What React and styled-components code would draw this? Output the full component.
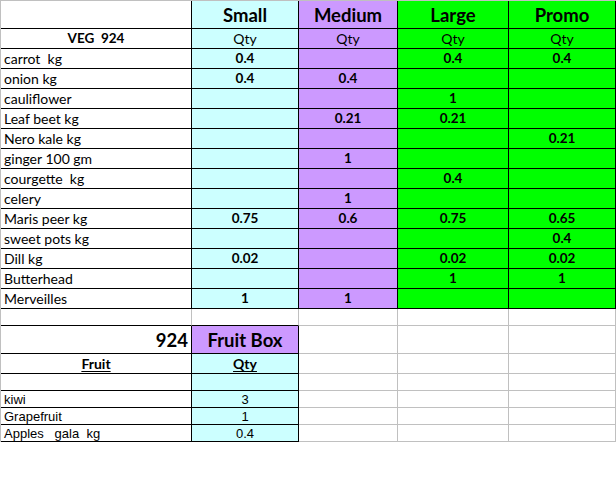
import React from 'react'
import styled, { createGlobalStyle } from 'styled-components'

const BLACK = '#000'
const GRID = '#c0c0c0'
const CYAN = '#ccffff'
const PURPLE = '#cc99ff'
const GREEN = '#00ff00'

const sizes = [
  { name: 'Small', bg: CYAN },
  { name: 'Medium', bg: PURPLE },
  { name: 'Large', bg: GREEN },
  { name: 'Promo', bg: GREEN },
]

const veg = [
  ['carrot  kg', '0.4', '', '0.4', '0.4'],
  ['onion kg', '0.4', '0.4', '', ''],
  ['cauliflower', '', '', '1', ''],
  ['Leaf beet kg', '', '0.21', '0.21', ''],
  ['Nero kale kg', '', '', '', '0.21'],
  ['ginger 100 gm', '', '1', '', ''],
  ['courgette  kg', '', '', '0.4', ''],
  ['celery', '', '1', '', ''],
  ['Maris peer kg', '0.75', '0.6', '0.75', '0.65'],
  ['sweet pots kg', '', '', '', '0.4'],
  ['Dill kg', '0.02', '', '0.02', '0.02'],
  ['Butterhead', '', '', '1', '1'],
  ['Merveilles', '1', '1', '', ''],
]

const fruit = [
  ['kiwi', '3'],
  ['Grapefruit', '1'],
  ['Apples   gala  kg', '0.4'],
]

function App() {
  return (
    <>
      <GlobalStyle />
      <Sheet>
        {/* header */}
        <Cell $h={28} />
        {sizes.map(s => (
          <Cell key={s.name} $h={28} $bg={s.bg} $align="center" $size={18.5} $bold>
            {s.name}
          </Cell>
        ))}

        <Cell $h={20} $align="center" $size={13.5} $bold>VEG  924</Cell>
        {sizes.map(s => (
          <Cell key={s.name} $h={20} $bg={s.bg} $align="center" $size={14}>Qty</Cell>
        ))}

        {veg.map(([item, ...qty]) => (
          <React.Fragment key={item}>
            <Cell $h={20} $size={14}>{item}</Cell>
            {qty.map((q, i) => (
              <Cell key={i} $h={20} $bg={sizes[i].bg} $align="center" $size={13.5} $bold>
                {q}
              </Cell>
            ))}
          </React.Fragment>
        ))}

        {/* spacer */}
        <Cell $h={17} $r={GRID} />
        <Cell $h={17} $r={GRID} />
        <Blank $h={17} />
        <Blank $h={17} />
        <Blank $h={17} />

        {/* fruit box */}
        <Cell $h={28} $align="flex-end" $size={18.5} $bold>924</Cell>
        <Cell $h={28} $bg={PURPLE} $align="center" $size={18.5} $bold>Fruit Box</Cell>
        <Blank $h={28} />
        <Blank $h={28} />
        <Blank $h={28} />

        <Cell $h={20} $align="center" $size={14} $bold><u>Fruit</u></Cell>
        <Cell $h={20} $bg={CYAN} $align="center" $size={14} $bold><u>Qty</u></Cell>
        <Blank $h={20} />
        <Blank $h={20} />
        <Blank $h={20} />

        <Cell $h={17} />
        <Cell $h={17} $bg={CYAN} />
        <Blank $h={17} />
        <Blank $h={17} />
        <Blank $h={17} />

        {fruit.map(([name, q]) => (
          <React.Fragment key={name}>
            <ArialCell $h={17}>{name}</ArialCell>
            <ArialCell $h={17} $bg={CYAN} $align="center">{q}</ArialCell>
            <Blank $h={17} />
            <Blank $h={17} />
            <Blank $h={17} />
          </React.Fragment>
        ))}
      </Sheet>
    </>
  )
}

export default App

const GlobalStyle = createGlobalStyle`
  body {
    margin: 0;
    background: #fff;
  }
`

const Sheet = styled.div`
  display: grid;
  grid-template-columns: 191px 107px 99px 111px 107px;
  border-top: 1px solid ${GRID};
  border-left: 1px solid ${GRID};
  width: 615px;
`

const Cell = styled.div`
  box-sizing: border-box;
  height: ${p => p.$h}px;
  display: flex;
  align-items: center;
  justify-content: ${p => p.$align || 'flex-start'};
  padding: 1px 3px 0;
  background: ${p => p.$bg || '#fff'};
  border-right: 1px solid ${p => p.$r || BLACK};
  border-bottom: 1px solid ${p => p.$b || BLACK};
  font-family: Lato, 'Open Sans', sans-serif;
  font-size: ${p => p.$size || 14}px;
  font-weight: ${p => (p.$bold ? 700 : 400)};
  line-height: 1;
  color: #000;
  white-space: pre;
  overflow: hidden;

  u {
    text-underline-offset: 2px;
  }
`

const ArialCell = styled(Cell)`
  font-family: 'Liberation Sans', Arial, sans-serif;
  font-size: 13px;
`

const Blank = styled(Cell).attrs({ $r: GRID, $b: GRID })``
